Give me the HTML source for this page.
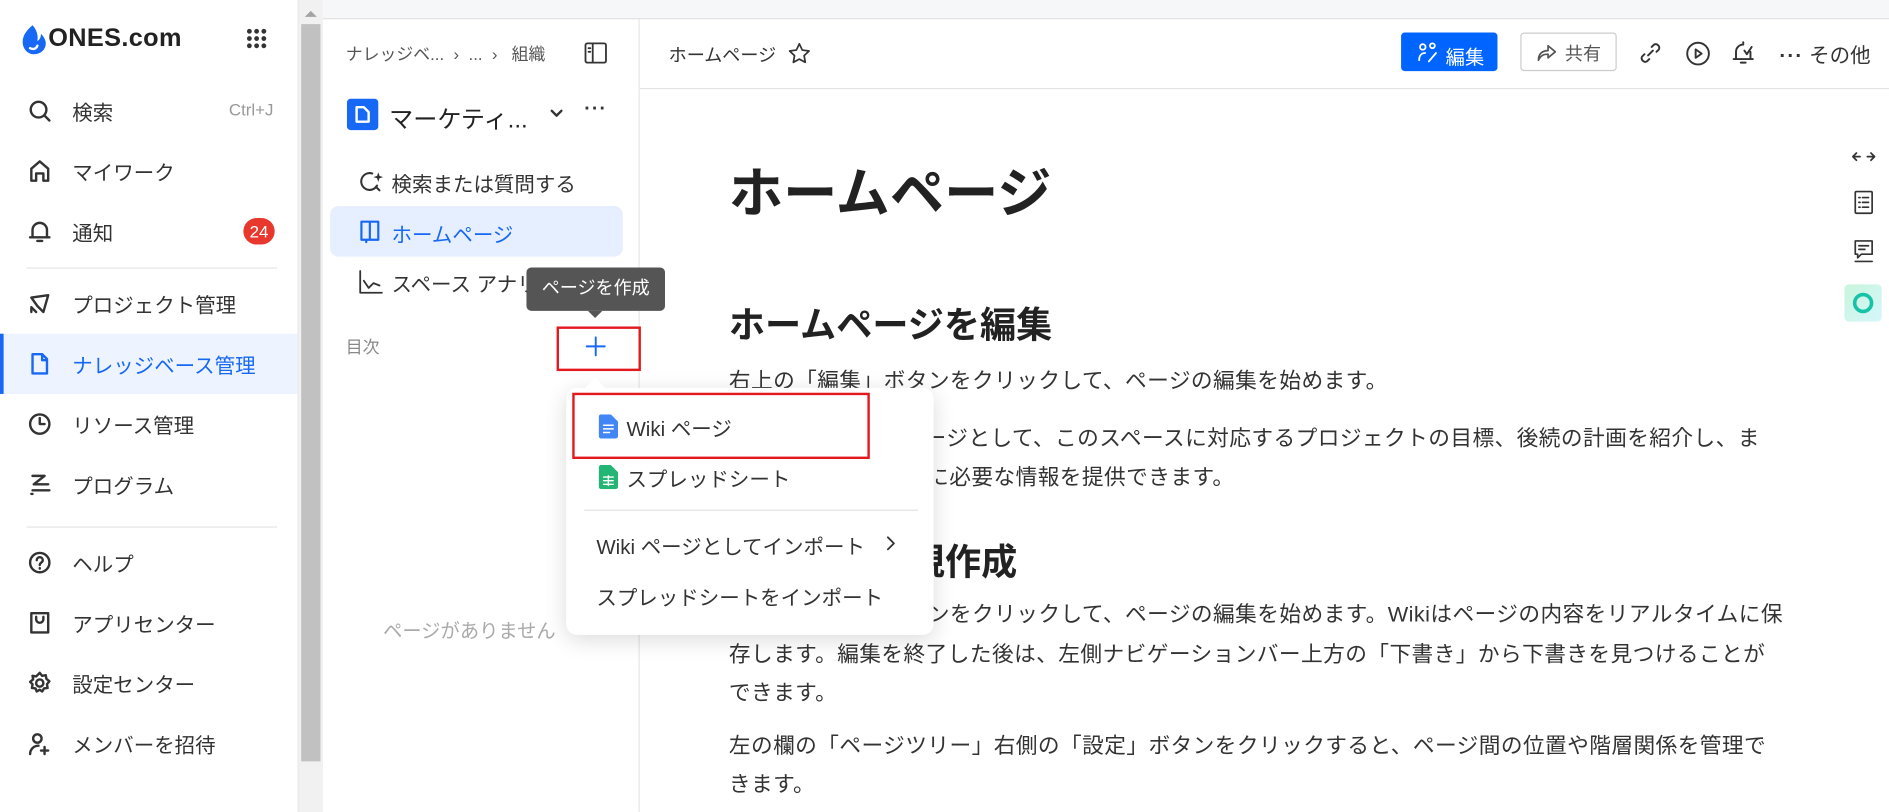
<!DOCTYPE html>
<html><head><meta charset="utf-8">
<style>
html,body{margin:0;padding:0;width:1889px;height:812px;overflow:hidden;background:#fff}
#w{position:absolute;left:0;top:0;width:1568px;height:674px;transform:scale(1.20472);transform-origin:0 0;font-family:"Liberation Sans","Noto Sans CJK JP",sans-serif;color:#333}
.a{position:absolute;white-space:nowrap}
.nav{position:absolute;left:0;width:247px;height:50px;font-size:17px;color:#333}
.nav .t{position:absolute;left:60px;top:50%;transform:translateY(-50%)}
.nav svg{position:absolute;left:23px;top:15px}
svg{fill:none;stroke:#333;stroke-width:2;stroke-linecap:round;stroke-linejoin:round}
.p{font-size:18px;letter-spacing:0.35px;line-height:33px;color:#333;position:absolute;left:605px;white-space:nowrap}
</style></head><body><div id="w">
<!-- left sidebar -->
<div class="a" style="left:0;top:0;width:247px;height:674px;border-right:1px solid #e6e6e6;background:#fff"></div>
<svg class="a" style="left:17px;top:20px" width="22" height="26" viewBox="0 0 22 26"><path d="M10 1C4 6 1 11 2 17c1 5 5 8 9 8 6 0 10-4 10-9 0-3-2-6-4-8 0 3-1 5-3 6 1-5-1-10-4-13z" fill="#1768f5" stroke="none"/><path d="M8 20c2 1 5 1 6-2" stroke="#fff" stroke-width="2"/></svg>
<div class="a" style="left:40px;top:20px;font-size:21px;font-weight:bold;color:#222;letter-spacing:0.3px">ONES.com</div>
<svg class="a" style="left:204px;top:23px" width="18" height="18" viewBox="0 0 18 18"><g fill="#333" stroke="none"><circle cx="3" cy="3" r="2"/><circle cx="9" cy="3" r="2"/><circle cx="15" cy="3" r="2"/><circle cx="3" cy="9" r="2"/><circle cx="9" cy="9" r="2"/><circle cx="15" cy="9" r="2"/><circle cx="3" cy="15" r="2"/><circle cx="9" cy="15" r="2"/><circle cx="15" cy="15" r="2"/></g></svg>

<div class="nav" style="top:67px"><svg width="20" height="20" viewBox="0 0 20 20"><circle cx="9" cy="9" r="6.5"/><path d="M14 14l4 4"/></svg><span class="t">検索</span><span class="a" style="left:190px;top:16px;font-size:14px;color:#999">Ctrl+J</span></div>
<div class="nav" style="top:117px"><svg width="20" height="20" viewBox="0 0 20 20"><path d="M3 18V8l7-6 7 6v10h-4v-6H7v6z"/></svg><span class="t">マイワーク</span></div>
<div class="nav" style="top:167px"><svg width="20" height="20" viewBox="0 0 20 20"><path d="M4 15V9a6 6 0 0112 0v6H4zM2 15h16M8 18h4"/></svg><span class="t">通知</span><span class="a" style="left:202px;top:14px;width:26px;height:22px;border-radius:11px;background:#e8372c;color:#fff;font-size:14px;text-align:center;line-height:22px">24</span></div>
<div class="a" style="left:22px;top:222px;width:208px;height:1px;background:#e5e5e5"></div>
<div class="nav" style="top:227px"><svg width="20" height="20" viewBox="0 0 20 20"><path d="M3 5l14-2-4 14-5-5zM3 13l4 4M3 17v-3"/></svg><span class="t">プロジェクト管理</span></div>
<div class="nav" style="top:277px;background:#eef4ff;color:#1768f5"><div class="a" style="left:0;top:0;width:3px;height:50px;background:#1768f5"></div><svg width="20" height="20" viewBox="0 0 20 20" style="stroke:#1768f5"><path d="M4 2h8l4 4v12H4zM12 2v5h4"/></svg><span class="t">ナレッジベース管理</span></div>
<div class="nav" style="top:327px"><svg width="20" height="20" viewBox="0 0 20 20"><circle cx="10" cy="10" r="8"/><path d="M10 5v5h4"/></svg><span class="t">リソース管理</span></div>
<div class="nav" style="top:377px"><svg width="20" height="20" viewBox="0 0 20 20"><path d="M4 3h10L5 10h12M4 15h14M3 18h1"/></svg><span class="t">プログラム</span></div>
<div class="a" style="left:22px;top:437px;width:208px;height:1px;background:#e5e5e5"></div>
<div class="nav" style="top:442px"><svg width="20" height="20" viewBox="0 0 20 20"><circle cx="10" cy="10" r="8"/><path d="M7.5 8a2.5 2.5 0 115 0c0 2-2.5 2-2.5 4M10 14.5v.5"/></svg><span class="t">ヘルプ</span></div>
<div class="nav" style="top:492px"><svg width="20" height="20" viewBox="0 0 20 20"><path d="M3 2h14v16H3zM7 5v2a3 3 0 006 0V5"/></svg><span class="t">アプリセンター</span></div>
<div class="nav" style="top:542px"><svg width="20" height="20" viewBox="0 0 20 20"><circle cx="10" cy="10" r="3"/><path d="M10 1.5l2 2.5 3-.5.5 3 2.5 2-2 2.5.5 3-3 .5-1.5 2.5-2-1.5-2.5 1.5-1-2.5-3-.5.5-3L2 9l2.5-2-.5-3 3 .5z"/></svg><span class="t">設定センター</span></div>
<div class="nav" style="top:592px"><svg width="20" height="20" viewBox="0 0 20 20"><circle cx="8" cy="6" r="3.5"/><path d="M2 19c0-4 3-7 7-7M14 13v6M11 16h6"/></svg><span class="t">メンバーを招待</span></div>

<!-- scrollbar -->
<div class="a" style="left:248px;top:0;width:20px;height:674px;background:#f1f1f1"></div>
<div class="a" style="left:250px;top:20px;width:16px;height:612px;background:#c1c1c1"></div>
<div class="a" style="left:253px;top:9px;width:0;height:0;border-left:5px solid transparent;border-right:5px solid transparent;border-bottom:5px solid #a3a3a3"></div>

<!-- top strip -->
<div class="a" style="left:268px;top:0;width:1300px;height:15px;background:#f6f7f9;border-bottom:1px solid #e3e3e3"></div>

<!-- main header -->
<div class="a" style="left:531px;top:73px;width:1037px;height:1px;background:#e3e3e3"></div>
<div class="a" style="left:555px;top:35px;font-size:15px;color:#333">ホームページ</div>
<svg class="a" style="left:654px;top:35px" width="19" height="19" viewBox="0 0 20 20"><path d="M10 1.5l2.6 5.4 5.9.8-4.3 4.1 1 5.8L10 14.8l-5.2 2.8 1-5.8L1.5 7.7l5.9-.8z" stroke-width="1.5"/></svg>
<div class="a" style="left:1163px;top:27px;width:80px;height:32px;border-radius:3px;background:#0064ff"></div>
<svg class="a" style="left:1177px;top:35px" width="18" height="18" viewBox="0 0 18 18"><circle cx="4" cy="4" r="2.3" stroke="#fff" stroke-width="1.5"/><circle cx="12" cy="3" r="2" stroke="#fff" stroke-width="1.5"/><path d="M1 15c0-4 2-6 5-6M9 16l6-7" stroke="#fff" stroke-width="1.5"/></svg>
<div class="a" style="left:1200px;top:34px;font-size:16px;color:#fff">編集</div>
<div class="a" style="left:1262px;top:27px;width:78px;height:30px;border-radius:3px;border:1px solid #ccc"></div>
<svg class="a" style="left:1275px;top:35px" width="17" height="17" viewBox="0 0 17 17"><path d="M2 15c0-6 4-8 8-8V3l6 5-6 5V10c-4 0-6 1-8 5z" stroke="#555" stroke-width="1.4"/></svg>
<div class="a" style="left:1299px;top:34px;font-size:15px;color:#555">共有</div>
<svg class="a" style="left:1360px;top:34px" width="20" height="20" viewBox="0 0 20 20"><path d="M8 12l4-4M11 5l2-2a3 3 0 014 4l-2 2M9 15l-2 2a3 3 0 01-4-4l2-2" stroke-width="1.6"/></svg>
<svg class="a" style="left:1399px;top:34px" width="21" height="21" viewBox="0 0 21 21"><circle cx="10.5" cy="10.5" r="9" stroke-width="1.6"/><path d="M8.5 7v7l5-3.5z" stroke-width="1.6"/></svg>
<svg class="a" style="left:1437px;top:33px" width="20" height="22" viewBox="0 0 20 22"><path d="M4 16V10a6 6 0 016-6M16 10v6M2 16h16M8 19h4M10 4v-2M11 9l2 3 4-6" stroke-width="1.6"/></svg>
<div class="a" style="left:1477px;top:32px;font-size:17px;color:#333"><b style="letter-spacing:1px">···</b> その他</div>

<!-- right rail -->
<svg class="a" style="left:1537px;top:123px" width="20" height="14" viewBox="0 0 20 14"><path d="M1 7h6M13 7h6M4 4L1 7l3 3M16 4l3 3-3 3" stroke-width="1.4"/></svg>
<svg class="a" style="left:1539px;top:158px" width="16" height="20" viewBox="0 0 16 20"><rect x="1" y="1" width="14" height="18" rx="1" stroke-width="1.4"/><path d="M4 6h1M7 6h5M4 10h1M7 10h5M4 14h1M7 14h5" stroke-width="1.4"/></svg>
<svg class="a" style="left:1538px;top:199px" width="18" height="20" viewBox="0 0 18 20"><path d="M2 1h14v11H7l-3 3v-3H2zM5 5h8M5 8h5M2 18h14" stroke-width="1.4"/></svg>
<div class="a" style="left:1531px;top:236px;width:31px;height:31px;border-radius:4px;background:linear-gradient(135deg,#c8f5dc,#d6f6fb)"></div>
<div class="a" style="left:1538px;top:243px;width:11px;height:11px;border-radius:50%;border:3.5px solid #17c3a8"></div>

<!-- content -->
<div class="a" style="left:605px;top:124px;font-size:45px;font-weight:bold;color:#222">ホームページ</div>
<div class="a" style="left:605px;top:245px;font-size:30px;font-weight:bold;color:#222">ホームページを編集</div>
<div class="p" style="top:300px">右上の「編集」ボタンをクリックして、ページの編集を始めます。</div>
<div class="p" style="top:348px">スペースのホームページとして、このスペースに対応するプロジェクトの目標、後続の計画を紹介し、ま</div>
<div class="p" style="top:380px">た、チームメンバーに必要な情報を提供できます。</div>
<div class="a" style="left:605px;top:442px;font-size:30px;font-weight:bold;color:#222">ページの新規作成</div>
<div class="p" style="top:494px">右上の「新規」ボタンをクリックして、ページの編集を始めます。Wikiはページの内容をリアルタイムに保</div>
<div class="p" style="top:527px">存します。編集を終了した後は、左側ナビゲーションバー上方の「下書き」から下書きを見つけることが</div>
<div class="p" style="top:559px">できます。</div>
<div class="p" style="top:603px">左の欄の「ページツリー」右側の「設定」ボタンをクリックすると、ページ間の位置や階層関係を管理で</div>
<div class="p" style="top:635px">きます。</div>

<!-- middle panel -->
<div class="a" style="left:530px;top:16px;width:1px;height:658px;background:#e6e6e6"></div>
<div class="a" style="left:287px;top:35px;font-size:14px;color:#555">ナレッジベ... &nbsp;›&nbsp; ... &nbsp;›&nbsp;&nbsp; 組織</div>
<svg class="a" style="left:485px;top:35px" width="19" height="18" viewBox="0 0 19 18"><rect x="1" y="1" width="17" height="16" rx="1.5" stroke-width="1.5"/><path d="M7 1v16M3.5 5h1.5M3.5 8h1.5" stroke-width="1.5"/></svg>
<div class="a" style="left:288px;top:82px;width:26px;height:26px;border-radius:3px;background:#1768f5"></div>
<svg class="a" style="left:294px;top:87px" width="14" height="16" viewBox="0 0 14 16"><path d="M2 2h6l4 4v8H2z" stroke="#fff" stroke-width="2"/></svg>
<div class="a" style="left:323px;top:83px;font-size:20px;color:#222">マーケティ...</div>
<svg class="a" style="left:456px;top:89px" width="12" height="10" viewBox="0 0 12 10"><path d="M2 3l4 4 4-4"/></svg>
<div class="a" style="left:485px;top:82px;font-size:16px;font-weight:bold;color:#333;letter-spacing:1px">···</div>
<svg class="a" style="left:298px;top:141px" width="22" height="20" viewBox="0 0 22 20"><path d="M15 13A7 7 0 1111 3M14 14l3 3" stroke-width="1.7"/><path d="M16 2l1 3 3 1-3 1-1 3-1-3-3-1 3-1z" fill="#333" stroke="none"/></svg>
<div class="a" style="left:325px;top:139px;font-size:17px;color:#333">検索または質問する</div>
<div class="a" style="left:274px;top:171px;width:243px;height:42px;border-radius:7px;background:#e5efff"></div>
<svg class="a" style="left:298px;top:182px" width="18" height="20" viewBox="0 0 18 20"><path d="M2 2h14v15H2zM9 2v15M6 17v2" stroke="#1768f5" stroke-width="1.8"/></svg>
<div class="a" style="left:325px;top:181px;font-size:17px;color:#1768f5">ホームページ</div>
<svg class="a" style="left:298px;top:224px" width="20" height="20" viewBox="0 0 20 20"><path d="M1 1v18h18M4 9l4 6 4-4 5 2" stroke-width="1.5"/></svg>
<div class="a" style="left:325px;top:222px;font-size:17px;color:#333">スペース アナリティ</div>
<div class="a" style="left:287px;top:278px;font-size:14px;color:#888">目次</div>
<div class="a" style="left:318px;top:510px;font-size:16px;color:#aaa">ページがありません</div>

<!-- tooltip -->
<div class="a" style="left:437px;top:222px;width:115px;height:36px;background:#555;border-radius:4px;color:#fff;font-size:15px;line-height:36px;text-align:center">ページを作成</div>
<div class="a" style="left:488px;top:258px;width:0;height:0;border-left:6px solid transparent;border-right:6px solid transparent;border-top:6px solid #555"></div>
<!-- plus box -->
<div class="a" style="left:462px;top:271px;width:66px;height:33px;border:2px solid #e3191f"></div>
<svg class="a" style="left:486px;top:279px" width="17" height="17" viewBox="0 0 17 17"><path d="M8.5 1v15M1 8.5h15" stroke="#1768f5" stroke-width="1.6"/></svg>

<!-- dropdown -->
<div class="a" style="left:470px;top:322px;width:305px;height:205px;background:#fff;border-radius:9px;box-shadow:0 4px 18px rgba(0,0,0,0.14)"></div>
<div class="a" style="left:488px;top:316px;width:12px;height:12px;background:#fff;transform:rotate(45deg)"></div>
<div class="a" style="left:475px;top:326px;width:243px;height:51px;border:2.5px solid #e3191f"></div>
<svg class="a" style="left:497px;top:344px" width="16" height="20" viewBox="0 0 16 20"><path d="M2 0h8l6 6v12a2 2 0 01-2 2H2a2 2 0 01-2-2V2a2 2 0 012-2z" fill="#4285f4" stroke="none"/><path d="M4 9h8M4 12h8M4 15h5" stroke="#fff" stroke-width="1.2"/></svg>
<div class="a" style="left:520px;top:342px;font-size:17px;color:#333">Wiki ページ</div>
<svg class="a" style="left:497px;top:386px" width="16" height="20" viewBox="0 0 16 20"><path d="M2 0h8l6 6v12a2 2 0 01-2 2H2a2 2 0 01-2-2V2a2 2 0 012-2z" fill="#23b574" stroke="none"/><path d="M4 10h8M4 13h8M4 16h8M8 9v8" stroke="#fff" stroke-width="1.2"/></svg>
<div class="a" style="left:520px;top:384px;font-size:17px;color:#333">スプレッドシート</div>
<div class="a" style="left:485px;top:423px;width:277px;height:1px;background:#e3e3e3"></div>
<div class="a" style="left:495px;top:440px;font-size:17px;color:#333">Wiki ページとしてインポート</div>
<svg class="a" style="left:734px;top:444px" width="10" height="14" viewBox="0 0 10 14"><path d="M3 2l5 5-5 5" stroke-width="1.5"/></svg>
<div class="a" style="left:495px;top:482px;font-size:17px;color:#333">スプレッドシートをインポート</div>
</div></body></html>
